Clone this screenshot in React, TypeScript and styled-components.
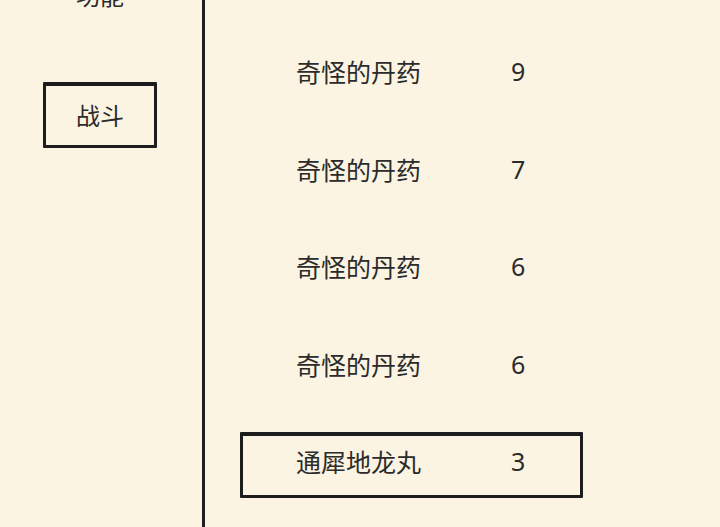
import React from "react";
import styled, { createGlobalStyle } from "styled-components";

const Global = createGlobalStyle`
  html, body { margin: 0; padding: 0; background: #fbf4e3; }
  body { font-family: "Noto Sans CJK SC", "Noto Sans", sans-serif; color: #2b2b2b; }
  #root { width: 720px; height: 527px; overflow: hidden; }
`;

const Screen = styled.div`
  display: flex;
  width: 720px;
  height: 527px;
  overflow: hidden;
  background: #fbf4e3;
`;

const Sidebar = styled.nav`
  width: 205px;
  flex: none;
  border-right: 3px solid #1f1f1f;
  display: flex;
  flex-direction: column;
  gap: 54px;
  padding-left: 43px;
  margin-top: -38px;
  box-sizing: border-box;
`;

const Tab = styled.div<{ $active?: boolean }>`
  width: 114px;
  height: 66px;
  box-sizing: border-box;
  display: flex;
  align-items: center;
  justify-content: center;
  font-size: 24px;
  line-height: 1;
  padding-bottom: 2px;
  color: #2b2b2b;
  border: 3px solid ${(p) => (p.$active ? "#1d1d1d" : "transparent")};
  border-top-width: 4px;
  border-radius: 1px;
`;

const Content = styled.main`
  flex: 1;
  display: flex;
  flex-direction: column;
  gap: 31.5px;
  padding: 42px 0 0 35px;
`;

const Row = styled.div<{ $selected?: boolean }>`
  width: 343px;
  height: 66px;
  flex: none;
  box-sizing: border-box;
  display: grid;
  grid-template-columns: 215px auto;
  align-items: center;
  padding-left: 53px;
  padding-bottom: 8px;
  font-size: 25px;
  line-height: 1;
  border: 3px solid ${(p) => (p.$selected ? "#1d1d1d" : "transparent")};
  border-top-width: 4px;
  border-radius: 1px;
`;

const Name = styled.span`
  letter-spacing: 0;
`;

const Count = styled.span`
  font-family: "Noto Sans", "Roboto", sans-serif;
  font-size: 25px;
`;

const items = [
  { name: "奇怪的丹药", count: 9 },
  { name: "奇怪的丹药", count: 7 },
  { name: "奇怪的丹药", count: 6 },
  { name: "奇怪的丹药", count: 6 },
  { name: "通犀地龙丸", count: 3, selected: true },
];

export default function App() {
  return (
    <>
      <Global />
      <Screen>
        <Sidebar>
          <Tab>功能</Tab>
          <Tab $active>战斗</Tab>
        </Sidebar>
        <Content>
          {items.map((it, i) => (
            <Row key={i} $selected={it.selected}>
              <Name>{it.name}</Name>
              <Count>{it.count}</Count>
            </Row>
          ))}
        </Content>
      </Screen>
    </>
  );
}
